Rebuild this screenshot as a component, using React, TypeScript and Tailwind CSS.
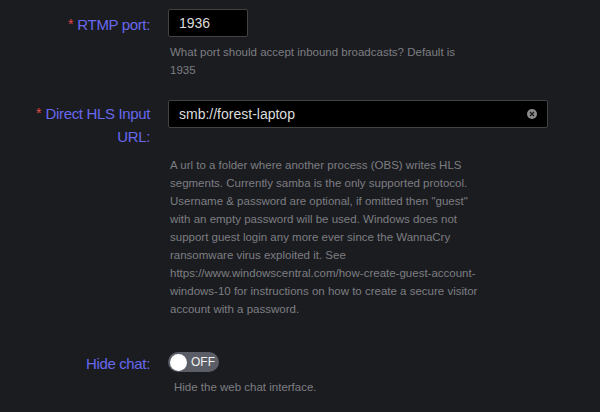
import React from "react";

const font = { fontFamily: '"Liberation Sans", Arial, sans-serif' };

function Req() {
  return <span className="text-[14px] text-[#e04848] mr-[4px] align-[1px] tracking-normal">*</span>;
}

export default function App() {
  return (
    <div
      className="w-[600px] h-[412px] bg-[#1b1c20] pt-[9px] overflow-hidden font-['Liberation_Sans',Arial,sans-serif]"
      style={font}
    >
      {/* RTMP port */}
      <div className="flex">
        <div className="w-[150px] shrink-0 text-right text-[15px] tracking-[-0.35px] leading-[28px] pt-[1px] text-[#6868ee]">
          <Req />
          RTMP port:
        </div>
        <div className="pl-[18px]">
          <div className="w-[80px] h-[28px] bg-black border border-[#434343] rounded-[2px] px-[10px] flex items-center text-[14px] text-[#dcdcdc]">
            1936
          </div>
          <div className="mt-[6px] pl-[2px] w-[312px] text-[11.5px] leading-[18px] text-[#7d7e82]">
            What port should accept inbound broadcasts? Default is 1935
          </div>
        </div>
      </div>

      {/* Direct HLS Input URL */}
      <div className="flex mt-[21px]">
        <div className="w-[150px] shrink-0 text-right text-[15px] tracking-[-0.35px] leading-[23px] pt-[2px] text-[#6868ee]">
          <Req />
          Direct HLS Input
          <br />
          URL:
        </div>
        <div className="pl-[18px]">
          <div className="w-[380px] h-[28px] bg-black border border-[#434343] rounded-[2px] pl-[10px] pr-[10px] flex items-center justify-between text-[14px] text-[#dcdcdc]">
            <span>smb://forest-laptop</span>
            <span className="w-[10px] h-[10px] rounded-full bg-[#8c8c8c] flex items-center justify-center">
              <svg width="6" height="6" viewBox="0 0 6 6">
                <path d="M1 1 L5 5 M5 1 L1 5" stroke="#1a1a1a" strokeWidth="1.2" />
              </svg>
            </span>
          </div>
          <div className="mt-[28px] pl-[2px] w-[312px] text-[11.5px] leading-[18px] text-[#7d7e82]">
            A url to a folder where another process (OBS) writes HLS segments. Currently samba is the only
            supported protocol. Username &amp; password are optional, if omitted then "guest" with an empty
            password will be used. Windows does not support guest login any more ever since the WannaCry
            ransomware virus exploited it. See https://www.windowscentral.com/how-create-guest-account-windows-10
            for instructions on how to create a secure visitor account with a password.
          </div>
        </div>
      </div>

      {/* Hide chat */}
      <div className="flex mt-[34px]">
        <div className="w-[150px] shrink-0 text-right text-[15px] tracking-[-0.35px] leading-[20px] pt-[2px] text-[#6868ee]">
          Hide chat:
        </div>
        <div className="pl-[18px]">
          <div className="w-[51px] h-[20px] rounded-full bg-[#5b5e66] flex items-center pl-[2px]">
            <span className="w-[17px] h-[17px] rounded-full bg-white" />
            <span className="ml-[4px] text-[12px] leading-[20px] text-[#f0f0f0]">OFF</span>
          </div>
          <div className="mt-[6px] pl-[6px] text-[11.5px] leading-[18px] text-[#7d7e82]">
            Hide the web chat interface.
          </div>
        </div>
      </div>
    </div>
  );
}
